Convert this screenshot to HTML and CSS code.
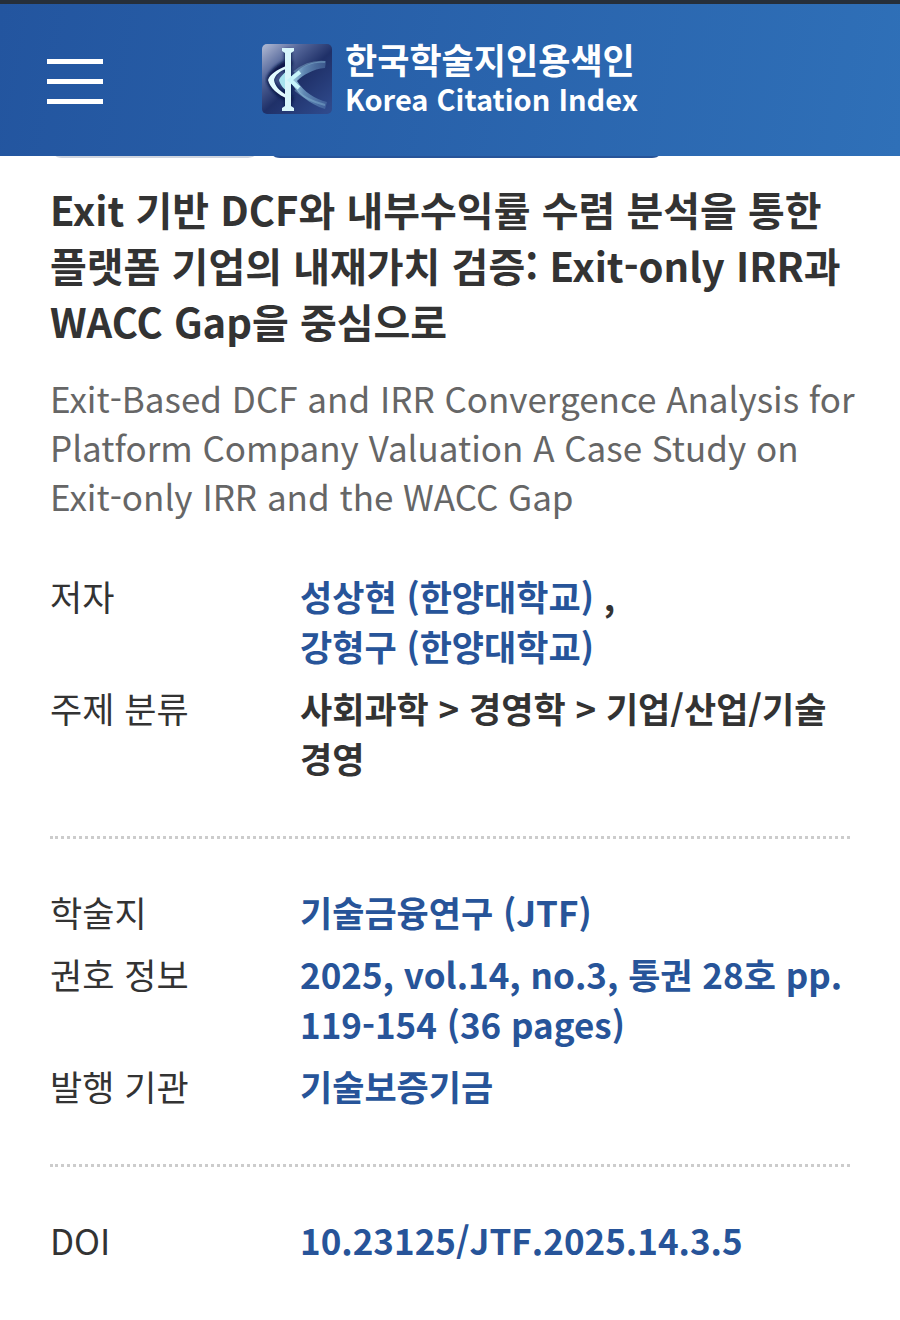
FILE: index.html
```
<!DOCTYPE html>
<html lang="ko">
<head>
    <meta charset="UTF-8">
    <meta name="viewport" content="width=device-width, initial-scale=1.0">
    <title>한국학술지인용색인</title>
    <link rel="stylesheet" href="styles.css">
</head>
<body>
    <header class="header">
        <button type="button" class="menu-btn" aria-label="메뉴">
            <span></span>
            <span></span>
            <span></span>
        </button>
        <a href="#" class="logo">
            <svg class="logo-mark" viewBox="0 0 70 70" aria-hidden="true">
                <defs>
                    <linearGradient id="markBg" x1="0" y1="0" x2="0.9" y2="1">
                        <stop offset="0" stop-color="#b4bdd6"/>
                        <stop offset="0.28" stop-color="#56689b"/>
                        <stop offset="0.55" stop-color="#1f3068"/>
                        <stop offset="1" stop-color="#2f4a8c"/>
                    </linearGradient>
                    <linearGradient id="markRay" x1="0" y1="0" x2="1" y2="0">
                        <stop offset="0" stop-color="#b5e3f0"/>
                        <stop offset="0.4" stop-color="#6f9cc4" stop-opacity="0.8"/>
                        <stop offset="1" stop-color="#5f88b8" stop-opacity="0.4"/>
                    </linearGradient>
                    <filter id="markGlow" x="-20%" y="-20%" width="140%" height="140%">
                        <feGaussianBlur stdDeviation="1.6"/>
                    </filter>
                </defs>
                <rect width="70" height="70" rx="5" fill="url(#markBg)"/>
                <path d="M26 5v60M30 17C20 21 10 28 8 36c3 10 13 17 23 20" fill="none" stroke="#071548" stroke-width="7" filter="url(#markGlow)"/>
                <path d="M27 35C37 23 49 17 64 17L63 24C51 25 41 31 35 37C42 48 53 55 65 58L63 65C47 60 35 50 27 35z" fill="url(#markRay)"/>
                <path d="M32 28C42 20 52 17 63 18M33 46c9 8 18 12 30 15" fill="none" stroke="#8fc0da" stroke-width="2" opacity="0.4"/>
                <path d="M24 22C15 26 8 30 6 36c2 8 10 15 20 19l-1-4c-8-4-12-9-13-15 1-5 6-9 12-11z" fill="#e3fbff"/>
                <path d="M26 26c-5 4-8 7-9 10 1 5 5 9 10 13l-1-7c-2-2-3-4-3-6s1-3 3-5z" fill="#a8e3ef"/>
                <path d="M20 4h12v3l-3 2v53l3 2v3H20v-3l3-2V9l-3-2z" fill="#d8f6fb"/>
                <path d="M38 28L28 36l9 8" fill="none" stroke="#c7f4fa" stroke-width="4"/>
            </svg>
            <span class="logo-text">
                <span class="logo-ko">한국학술지인용색인</span>
                <span class="logo-en">Korea Citation Index</span>
            </span>
        </a>
    </header>

    <main class="article">
        <div class="tags" aria-hidden="true">
            <span class="tag tag-gray"></span>
            <span class="tag tag-blue"></span>
        </div>

        <h1 class="title">Exit 기반 DCF와 내부수익률 수렴 분석을 통한 플랫폼 기업의 내재가치 검증: Exit-only IRR과 WACC Gap을 중심으로</h1>
        <p class="subtitle">Exit-Based DCF and IRR Convergence Analysis for Platform Company Valuation A Case Study on Exit-only IRR and the WACC Gap</p>

        <dl class="info">
            <div class="row">
                <dt>저자</dt>
                <dd><a href="#">성상현 (한양대학교)</a> ,<br><a href="#">강형구 (한양대학교)</a></dd>
            </div>
            <div class="row">
                <dt>주제 분류</dt>
                <dd>사회과학 &gt; 경영학 &gt; 기업/산업/기술경영</dd>
            </div>
        </dl>

        <dl class="info">
            <div class="row">
                <dt>학술지</dt>
                <dd><a href="#">기술금융연구 (JTF)</a></dd>
            </div>
            <div class="row">
                <dt>권호 정보</dt>
                <dd><a href="#">2025, vol.14, no.3, 통권 28호 pp. 119-154 (36 pages)</a></dd>
            </div>
            <div class="row">
                <dt>발행 기관</dt>
                <dd><a href="#">기술보증기금</a></dd>
            </div>
        </dl>

        <dl class="info">
            <div class="row">
                <dt>DOI</dt>
                <dd><a href="#">10.23125/JTF.2025.14.3.5</a></dd>
            </div>
        </dl>
    </main>
</body>
</html>
```

FILE: styles.css
```
* {
    box-sizing: border-box;
}

body {
    margin: 0;
    background-color: #fff;
    color: #333;
    font-family: "Noto Sans CJK KR", "Noto Sans", sans-serif;
    font-size: 35px;
    line-height: 50px;
}

a {
    color: #275499;
    text-decoration: none;
}

/* header */
.header {
    position: sticky;
    top: 0;
    z-index: 10;
    display: grid;
    grid-template-columns: 1fr auto 1fr;
    align-items: center;
    height: 156px;
    padding: 0 47px 2px;
    border-top: 4px solid #262f3a;
    background: linear-gradient(100deg, #23559f, #2f70b8);
}

.menu-btn {
    display: flex;
    flex-direction: column;
    gap: 15px;
    width: 56px;
    margin-top: 4px;
    padding: 0;
    border: none;
    background: none;
    cursor: pointer;
}

.menu-btn span {
    width: 100%;
    height: 5px;
    background-color: #fff;
}

.logo {
    display: flex;
    align-items: center;
    gap: 13px;
    color: #fff;
    font-weight: bold;
}

.logo-mark {
    width: 70px;
    height: 70px;
}

.logo-text {
    display: flex;
    flex-direction: column;
}

.logo-ko {
    font-size: 35px;
    line-height: 38px;
}

.logo-en {
    font-size: 29px;
    line-height: 40px;
}

/* article */
.article {
    padding: 0 50px 50px;
}

.tags {
    display: flex;
    gap: 8px;
    margin-top: -48px;
    margin-bottom: 23px;
}

.tag {
    height: 50px;
    border-radius: 12px;
}

.tag-gray {
    width: 210px;
    background-color: #ced4df;
}

.tag-blue {
    width: 396px;
    background-color: #275499;
}

.title {
    margin: 0 0 24px;
    font-size: 40px;
    line-height: 56px;
}

.subtitle {
    margin: 0 -10px 3px 0;
    color: #666;
    font-size: 35px;
    line-height: 49px;
}

/* info list */
.info {
    display: flex;
    flex-direction: column;
    gap: 12px;
    margin: 0;
    padding: 48px 0 53px;
}

.info + .info {
    border-top: 3px dotted #ccc;
}

.row {
    display: grid;
    grid-template-columns: 250px 1fr;
}

.row dd {
    margin: 0;
    font-weight: bold;
}
```
